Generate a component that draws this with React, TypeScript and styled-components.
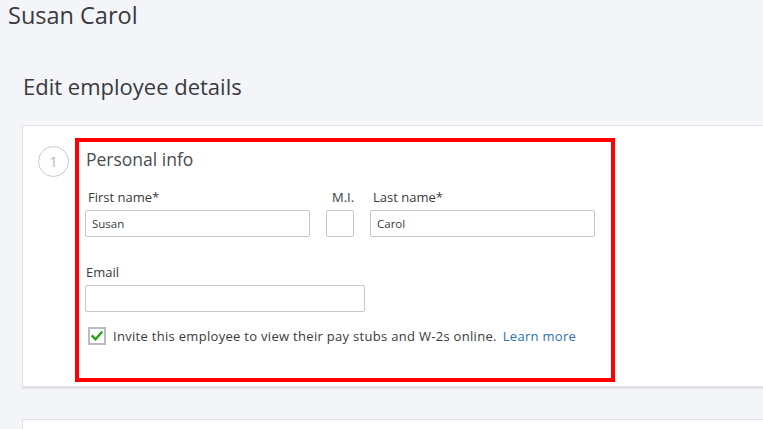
import React from "react";
import styled, { createGlobalStyle } from "styled-components";

const FONT = `"Open Sans", Lato, Arial, sans-serif`;

const GlobalStyle = createGlobalStyle`
  html, body {
    margin: 0;
    padding: 0;
    background: #f4f5f8;
    overflow: hidden;
  }
  body {
    font-family: ${FONT};
    color: #393a3d;
  }
`;

const Page = styled.div`
  width: 763px;
  height: 429px;
  overflow: hidden;
`;

const EmployeeName = styled.h1`
  margin: 0;
  padding: 0 0 0 8px;
  font-size: 23.5px;
  font-weight: 400;
  line-height: 30px;
  color: #393a3d;
`;

const Content = styled.div`
  padding: 42px 0 0 22px;
`;

const PageTitle = styled.h2`
  margin: 0 0 0 1px;
  font-size: 22px;
  font-weight: 400;
  line-height: 28px;
  color: #393a3d;
`;

const Card = styled.section`
  margin-top: 25px;
  background: #fff;
  border: 1px solid #e3e4e8;
  border-right: none;
  border-bottom: 3px solid #e1e2e6;
  display: flex;
  align-items: flex-start;
  padding: 12px 0 4px 15px;
`;

const NextCard = styled.section`
  margin-top: 30px;
  height: 40px;
  background: #fff;
  border-top: 1px solid #e0e1e5;
  border-left: 1px solid #e0e1e5;
`;

const StepBadge = styled.div`
  flex: none;
  width: 29px;
  height: 29px;
  margin-top: 8px;
  border: 1px solid #c9cacd;
  border-radius: 50%;
  display: flex;
  align-items: center;
  justify-content: center;
  font-size: 14px;
  color: #b4b5b8;
`;

const Highlight = styled.div`
  box-sizing: border-box;
  margin-left: 6px;
  width: 540px;
  height: 244px;
  border: 4px solid #ff0000;
  padding: 5px 0 0 6px;
`;

const SectionTitle = styled.h3`
  margin: 0 0 0 1px;
  font-size: 17.5px;
  font-weight: 400;
  line-height: 24px;
  color: #4a4b4f;
`;

const NameRow = styled.div`
  display: grid;
  grid-template-columns: 225px 28px 225px;
  column-gap: 16px;
  margin-top: 18px;
`;

const Field = styled.label<{ $width?: number }>`
  display: flex;
  flex-direction: column;
  width: ${(p) => (p.$width ? `${p.$width}px` : "auto")};
`;

const FieldLabel = styled.span<{ $indent?: number }>`
  font-size: 13px;
  line-height: 16px;
  padding-left: ${(p) => p.$indent ?? 3}px;
  margin-bottom: 5px;
  color: #393a3d;
  white-space: nowrap;
`;

const TextInput = styled.input`
  box-sizing: border-box;
  width: 100%;
  height: 27px;
  margin: 0;
  border: 1px solid #c6c7ca;
  border-radius: 2px;
  padding: 0 6px;
  font-family: ${FONT};
  font-size: 11.5px;
  color: #393a3d;
  background: #fff;
  outline: none;
`;

const EmailRow = styled.div`
  margin-top: 27px;
`;

const InviteRow = styled.div`
  display: flex;
  align-items: center;
  margin: 15px 0 0 3px;
  font-size: 13px;
  letter-spacing: 0.3px;
  line-height: 18px;
  color: #393a3d;
`;

const CheckBox = styled.span`
  flex: none;
  box-sizing: border-box;
  width: 18px;
  height: 18px;
  border: 2px solid #b9bcc2;
  background: #fff;
  display: flex;
  align-items: center;
  justify-content: center;
  margin-right: 7px;
`;

const LearnMore = styled.a`
  margin-left: 6px;
  color: #2a6ebb;
  text-decoration: none;
`;

function CheckMark() {
  return (
    <svg width="12" height="10" viewBox="0 0 12 10" aria-hidden="true">
      <path
        d="M1.5 5.2 L4.5 8.2 L10.5 1.5"
        fill="none"
        stroke="#2ca01c"
        strokeWidth="2.4"
        strokeLinecap="square"
      />
    </svg>
  );
}

export default function App() {
  return (
    <Page>
      <GlobalStyle />
      <EmployeeName>Susan Carol</EmployeeName>
      <Content>
        <PageTitle>Edit employee details</PageTitle>
        <Card>
          <StepBadge>1</StepBadge>
          <Highlight>
            <SectionTitle>Personal info</SectionTitle>
            <NameRow>
              <Field>
                <FieldLabel>First name*</FieldLabel>
                <TextInput defaultValue="Susan" />
              </Field>
              <Field>
                <FieldLabel $indent={6}>M.I.</FieldLabel>
                <TextInput />
              </Field>
              <Field>
                <FieldLabel>Last name*</FieldLabel>
                <TextInput defaultValue="Carol" />
              </Field>
            </NameRow>
            <EmailRow>
              <Field $width={280}>
                <FieldLabel $indent={1}>Email</FieldLabel>
                <TextInput />
              </Field>
            </EmailRow>
            <InviteRow>
              <CheckBox>
                <CheckMark />
              </CheckBox>
              Invite this employee to view their pay stubs and W-2s online.
              <LearnMore href="#">Learn more</LearnMore>
            </InviteRow>
          </Highlight>
        </Card>
        <NextCard />
      </Content>
    </Page>
  );
}
